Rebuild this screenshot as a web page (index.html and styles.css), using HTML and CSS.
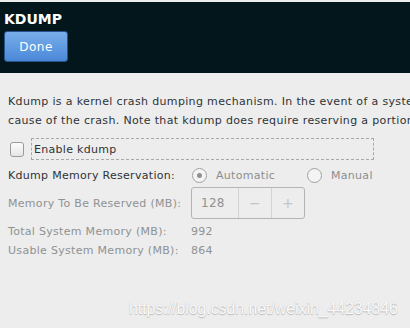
FILE: index.html
```html
<!DOCTYPE html>
<html lang="en">
<head>
    <meta charset="UTF-8">
    <title>KDUMP</title>
    <link rel="stylesheet" href="styles.css">
</head>
<body>
    <div class="header">
        <h1>KDUMP</h1>
        <button class="done">Done</button>
    </div>
    <div class="content">
        <p class="desc">Kdump is a kernel crash dumping mechanism. In the event of a system crash, kdump will capture information from your system that can be invaluable in determining the</p>
        <p class="desc">cause of the crash. Note that kdump does require reserving a portion of system memory that will be unavailable for other uses.</p>
        <div class="enable">
            <span class="check"></span>
            <span class="enable-label">Enable kdump</span>
        </div>
        <div class="row">
            <span class="label">Kdump Memory Reservation:</span>
            <span class="radio on"></span><span class="opt">Automatic</span>
            <span class="radio"></span><span class="opt">Manual</span>
        </div>
        <div class="row spin-row">
            <span class="label dim">Memory To Be Reserved (MB):</span>
            <div class="spin">
                <span class="spin-val">128</span>
                <span class="spin-btn">&minus;</span>
                <span class="spin-btn">+</span>
            </div>
        </div>
        <div class="row info">
            <span class="label dim">Total System Memory (MB):</span>
            <span class="dim">992</span>
        </div>
        <div class="row info">
            <span class="label dim">Usable System Memory (MB):</span>
            <span class="dim">864</span>
        </div>
    </div>
    <div class="mark">https://blog.csdn.net/weixin_44234846</div>
</body>
</html>
```

FILE: styles.css
```css
body {
    margin: 0;
    padding-top: 2px;
    background-color: #ededed;
    font-family: "DejaVu Sans", sans-serif;
    font-size: 11px;
    color: #2e3436;
    height: 326px;
    overflow: hidden;
    position: relative;
}

.header {
    background-color: #02161b;
    height: 71px;
    padding: 0 4px;
    box-sizing: border-box;
    padding-top: 9px;
}

h1 {
    margin: 0;
    color: #fff;
    font-size: 14px;
    font-weight: bold;
    line-height: 17px;
}

.done {
    display: block;
    margin-top: 3px;
    width: 64px;
    height: 31px;
    border: 1px solid #24538f;
    border-radius: 3px;
    background: linear-gradient(#78aeea, #4a88d8);
    color: #fff;
    font-family: "DejaVu Sans", sans-serif;
    font-size: 12px;
    letter-spacing: 0.5px;
    padding: 0;
}

.content {
    padding: 0 8px;
    overflow: hidden;
}

.desc {
    margin: 0;
    white-space: nowrap;
    line-height: 19px;
    letter-spacing: 0.35px;
}

.desc:first-child {
    margin-top: 19px;
}

.enable {
    display: flex;
    align-items: center;
    margin-top: 8px;
    height: 22px;
}

.check {
    width: 12px;
    height: 13px;
    border: 1px solid #9a9c9c;
    border-radius: 3px;
    background: linear-gradient(#fcfcfc, #e6e6e6);
    margin-left: 2px;
}

.enable-label {
    margin-left: 7px;
    width: 339px;
    height: 20px;
    line-height: 21px;
    padding-left: 2px;
    border: 1px dashed #a8a8a8;
    letter-spacing: 0.3px;
}

.row {
    display: flex;
    align-items: center;
    letter-spacing: 0.3px;
}

.label {
    width: 183px;
    flex: none;
}

.enable + .row {
    margin-top: 5px;
    height: 20px;
}

.radio {
    flex: none;
    width: 13px;
    height: 13px;
    border: 1px solid #a0a2a2;
    border-radius: 50%;
    background: #f4f4f4;
    position: relative;
    margin-left: 1px;
}

.radio.on::after {
    content: "";
    position: absolute;
    left: 4px;
    top: 4px;
    width: 5px;
    height: 5px;
    border-radius: 50%;
    background: #8e9091;
}

.opt {
    flex: none;
    color: #8b8e8f;
    margin-left: 9px;
    width: 90px;
}

.dim {
    color: #8f9293;
}

.spin-row {
    margin-top: 2px;
}

.spin {
    display: flex;
    height: 30px;
    border: 1px solid #b3b5b5;
    border-radius: 3px;
    color: #8f9293;
}

.spin-val {
    width: 46px;
    line-height: 30px;
    padding-left: 9px;
    box-sizing: border-box;
    font-size: 12px;
}

.spin-btn {
    width: 32px;
    border-left: 1px solid #d2d3d3;
    text-align: center;
    line-height: 30px;
    font-size: 14px;
    color: #c4c6c6;
}

.info {
    height: 19px;
}

.spin-row + .info {
    margin-top: 3px;
}

.mark {
    position: absolute;
    left: 129px;
    top: 300px;
    font-family: "Liberation Sans", sans-serif;
    font-size: 15.8px;
    color: #fafafa;
    text-shadow: 0 1px 1px #b8b8b8, 0 0 1px #c8c8c8;
}
```
